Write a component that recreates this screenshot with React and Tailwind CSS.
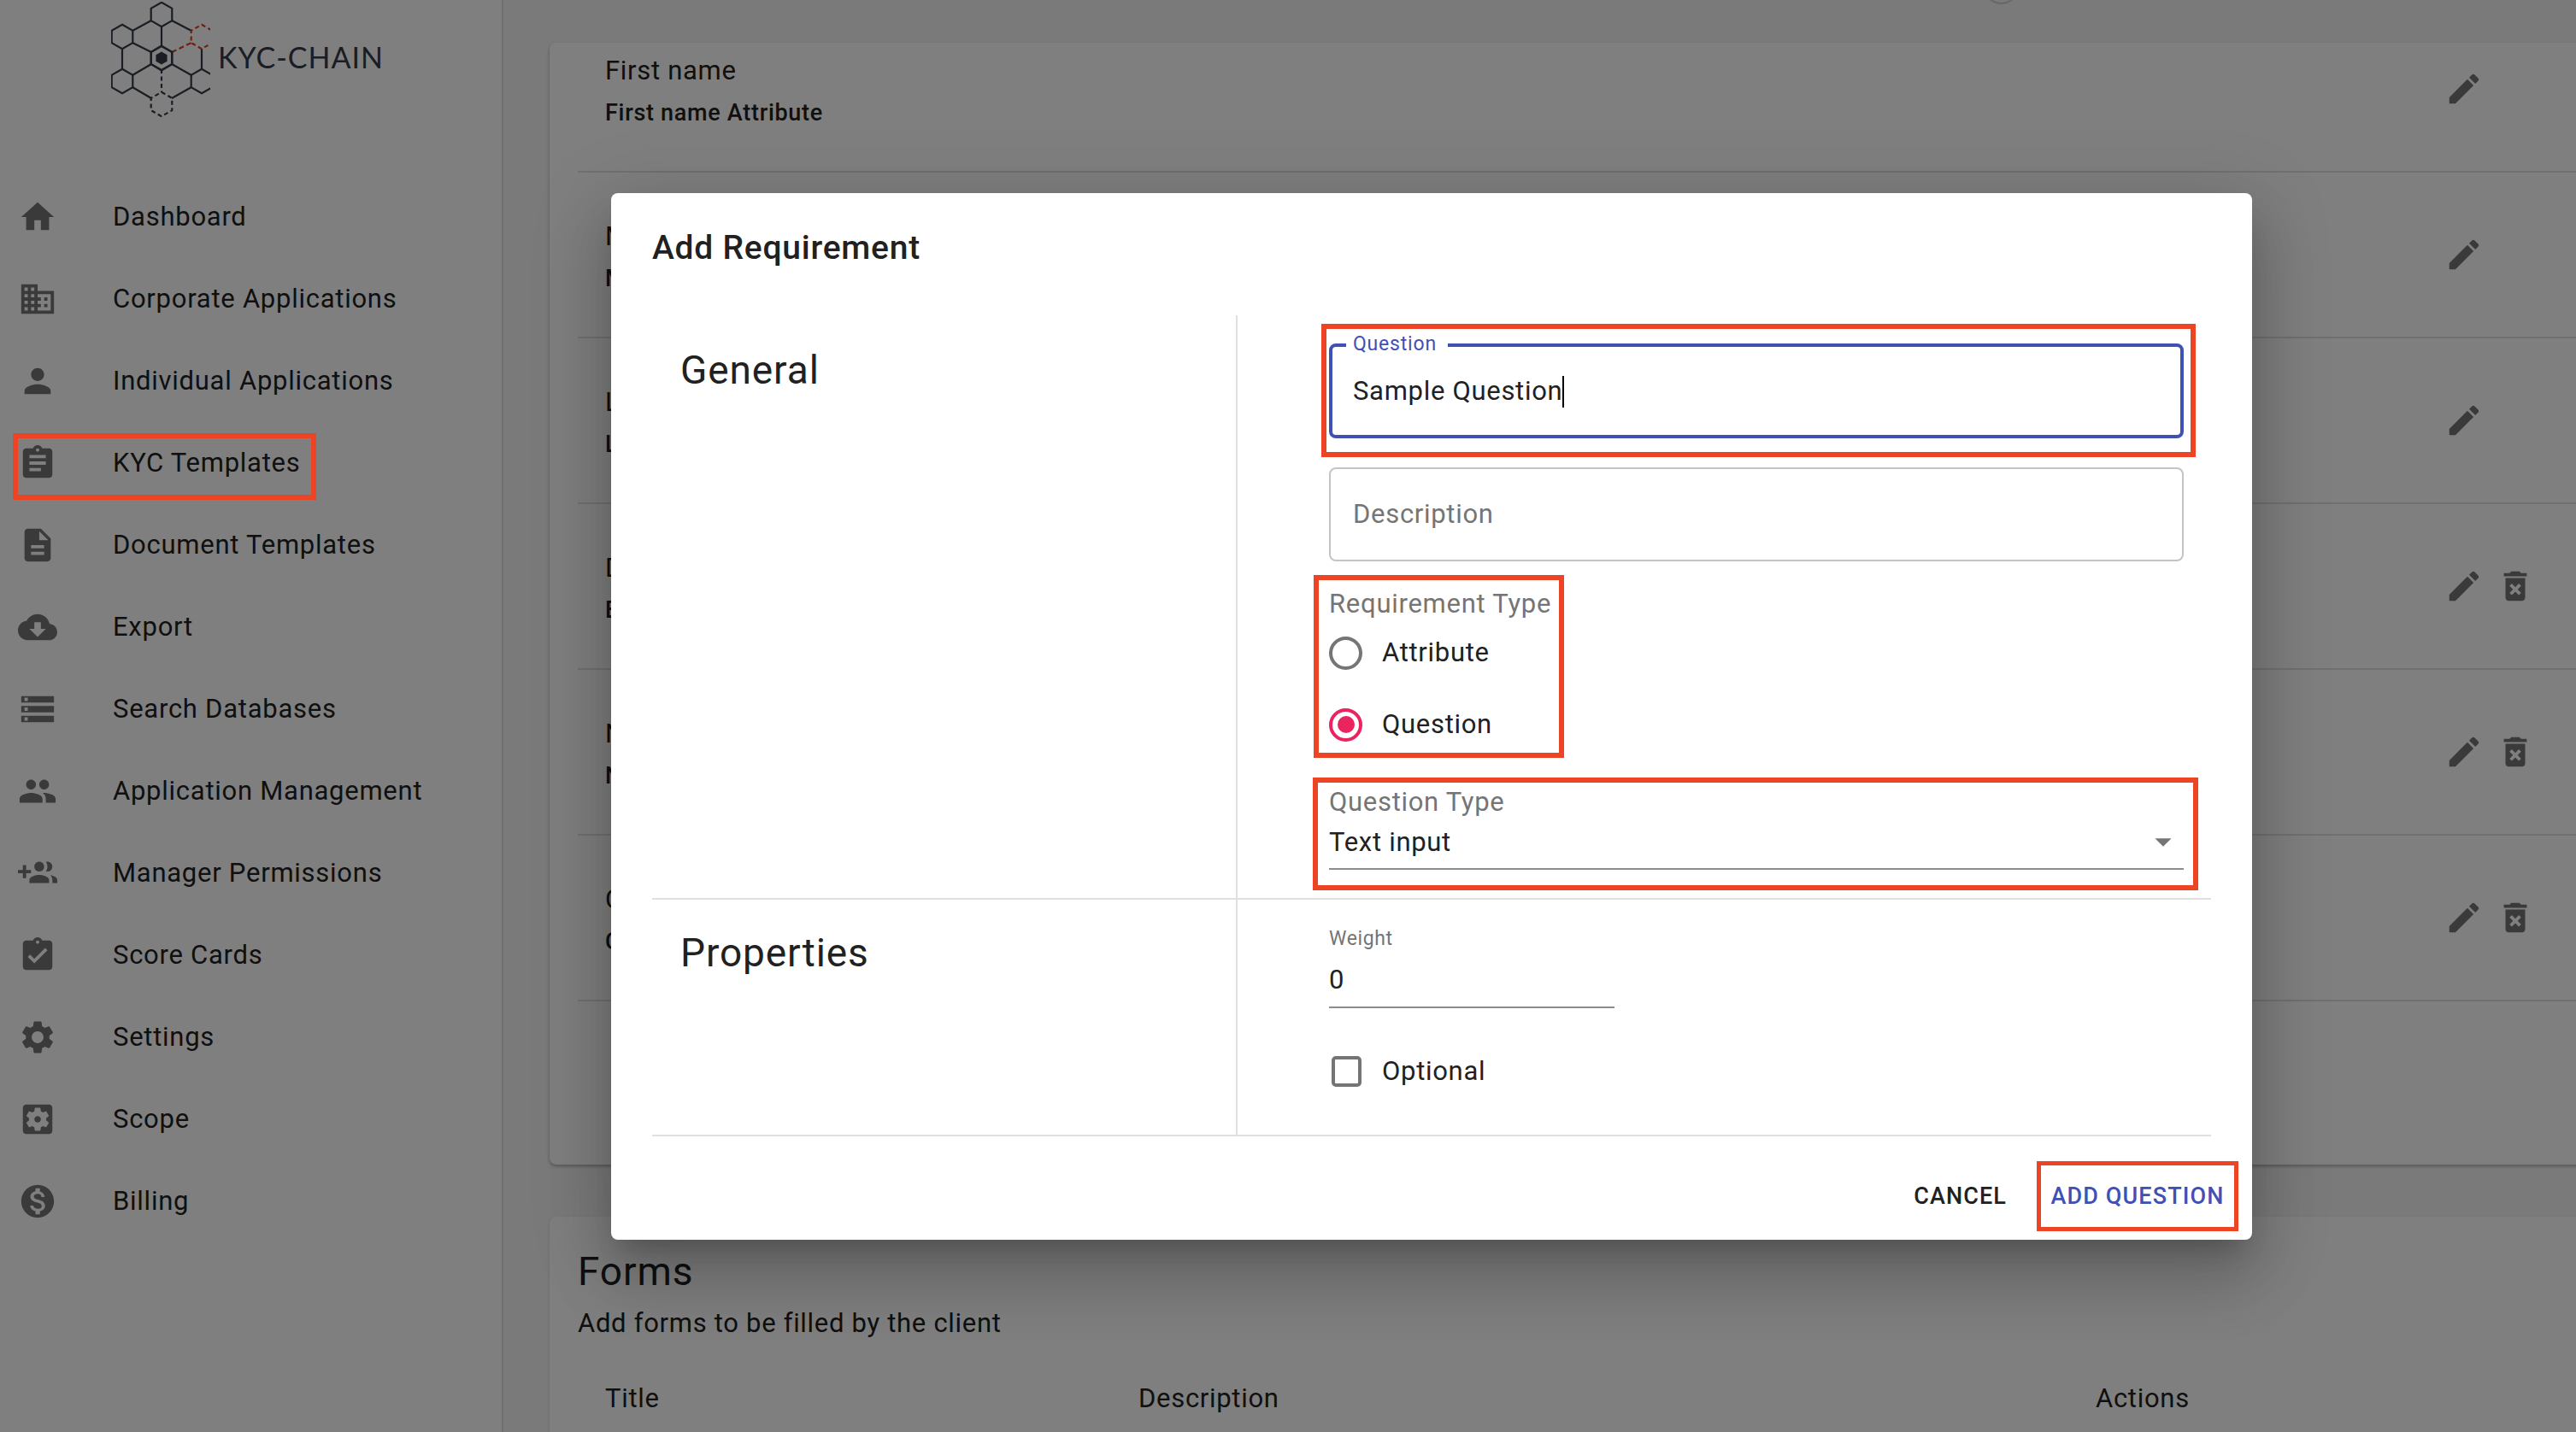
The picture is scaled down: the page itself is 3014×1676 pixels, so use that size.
import React from "react";

const ICONS = {
  home: "M10 20v-6h4v6h5v-8h3L12 3 2 12h3v8z",
  domain: "M12 7V3H2v18h20V7H12zM6 19H4v-2h2v2zm0-4H4v-2h2v2zm0-4H4V9h2v2zm0-4H4V5h2v2zm4 12H8v-2h2v2zm0-4H8v-2h2v2zm0-4H8V9h2v2zm0-4H8V5h2v2zm10 12h-8v-2h2v-2h-2v-2h2v-2h-2V9h8v10zm-2-8h-2v2h2v-2zm0 4h-2v2h2v-2z",
  person: "M12 12c2.21 0 4-1.79 4-4s-1.79-4-4-4-4 1.79-4 4 1.79 4 4 4zm0 2c-2.67 0-8 1.34-8 4v2h16v-2c0-2.66-5.33-4-8-4z",
  assignment: "M19 3h-4.18C14.4 1.84 13.3 1 12 1c-1.3 0-2.4.84-2.82 2H5c-1.1 0-2 .9-2 2v14c0 1.1.9 2 2 2h14c1.1 0 2-.9 2-2V5c0-1.1-.9-2-2-2zm-7 0c.55 0 1 .45 1 1s-.45 1-1 1-1-.45-1-1 .45-1 1-1zm2 14H7v-2h7v2zm3-4H7v-2h10v2zm0-4H7V7h10v2z",
  description: "M14 2H6c-1.1 0-1.99.9-1.99 2L4 20c0 1.1.89 2 1.99 2H18c1.1 0 2-.9 2-2V8l-6-6zm2 16H8v-2h8v2zm0-4H8v-2h8v2zm-3-5V3.5L18.5 9H13z",
  cloud: "M19.35 10.04C18.67 6.59 15.64 4 12 4 9.11 4 6.6 5.64 5.35 8.04 2.34 8.36 0 10.91 0 14c0 3.31 2.69 6 6 6h13c2.76 0 5-2.24 5-5 0-2.64-2.05-4.78-4.65-4.96zM17 13l-5 5-5-5h3V9h4v4h3z",
  storage: "M2 20h20v-4H2v4zm2-3h2v2H4v-2zM2 4v4h20V4H2zm4 3H4V5h2v2zm-4 7h20v-4H2v4zm2-3h2v2H4v-2z",
  people: "M16 11c1.66 0 2.99-1.34 2.99-3S17.66 5 16 5c-1.66 0-3 1.34-3 3s1.34 3 3 3zm-8 0c1.66 0 2.99-1.34 2.99-3S9.66 5 8 5C6.34 5 5 6.34 5 8s1.34 3 3 3zm0 2c-2.33 0-7 1.17-7 3.5V19h14v-2.5c0-2.33-4.67-3.5-7-3.5zm8 0c-.29 0-.62.02-.97.05 1.16.84 1.97 1.97 1.97 3.45V19h6v-2.5c0-2.33-4.67-3.5-7-3.5z",
  groupAdd: "M8 10H5V7H3v3H0v2h3v3h2v-3h3v-2zm10 1c1.66 0 2.99-1.34 2.99-3S19.66 5 18 5c-.32 0-.63.05-.91.14.57.81.9 1.79.9 2.86s-.34 2.04-.9 2.86c.28.09.59.14.91.14zm-5 0c1.66 0 2.99-1.34 2.99-3S14.66 5 13 5c-1.66 0-3 1.34-3 3s1.34 3 3 3zm6.62 2.16c.83.73 1.38 1.66 1.38 2.84v2h3v-2c0-1.54-2.37-2.49-4.38-2.84zM13 13c-2 0-6 1-6 3v2h12v-2c0-2-4-3-6-3z",
  turnedIn: "M19 3h-4.18C14.4 1.84 13.3 1 12 1c-1.3 0-2.4.84-2.82 2H5c-1.1 0-2 .9-2 2v14c0 1.1.9 2 2 2h14c1.1 0 2-.9 2-2V5c0-1.1-.9-2-2-2zm-7 0c.55 0 1 .45 1 1s-.45 1-1 1-1-.45-1-1 .45-1 1-1zm-2 14l-4-4 1.41-1.41L10 14.17l6.59-6.59L18 9l-8 8z",
  settings: "M19.14 12.94c.04-.3.06-.61.06-.94 0-.32-.02-.64-.07-.94l2.03-1.58c.18-.14.23-.41.12-.61l-1.92-3.32c-.12-.22-.37-.29-.59-.22l-2.39.96c-.5-.38-1.03-.7-1.62-.94l-.36-2.54c-.04-.24-.24-.41-.48-.41h-3.84c-.24 0-.43.17-.47.41l-.36 2.54c-.59.24-1.13.57-1.62.94l-2.39-.96c-.22-.08-.47 0-.59.22L2.74 8.87c-.12.21-.08.47.12.61l2.03 1.58c-.05.3-.09.63-.09.94s.02.64.07.94l-2.03 1.58c-.18.14-.23.41-.12.61l1.92 3.32c.12.22.37.29.59.22l2.39-.96c.5.38 1.03.7 1.62.94l.36 2.54c.05.24.24.41.48.41h3.84c.24 0 .44-.17.47-.41l.36-2.54c.59-.24 1.13-.56 1.62-.94l2.39.96c.22.08.47 0 .59-.22l1.92-3.32c.12-.22.07-.47-.12-.61l-2.01-1.58zM12 15.6c-1.98 0-3.6-1.62-3.6-3.6s1.62-3.6 3.6-3.6 3.6 1.62 3.6 3.6-1.62 3.6-3.6 3.6z",
  scope: "M12 10c-1.1 0-2 .9-2 2s.9 2 2 2 2-.9 2-2-.9-2-2-2zm7-7H5c-1.11 0-2 .9-2 2v14c0 1.1.89 2 2 2h14c1.11 0 2-.9 2-2V5c0-1.1-.89-2-2-2zm-1.75 9c0 .23-.02.46-.05.68l1.48 1.16c.13.11.17.3.08.45l-1.4 2.42c-.09.15-.27.21-.43.15l-1.74-.7c-.36.28-.76.51-1.18.69l-.26 1.85c-.03.17-.18.3-.35.3h-2.8c-.17 0-.32-.13-.35-.29l-.26-1.85c-.43-.18-.82-.41-1.18-.69l-1.74.7c-.16.06-.34 0-.43-.15l-1.4-2.42c-.09-.15-.05-.34.08-.45l1.48-1.16c-.03-.23-.05-.46-.05-.69 0-.23.02-.46.05-.68l-1.48-1.16c-.13-.11-.17-.3-.08-.45l1.4-2.42c.09-.15.27-.21.43-.15l1.74.7c.36-.28.76-.51 1.18-.69l.26-1.85c.03-.17.18-.3.35-.3h2.8c.17 0 .32.13.35.29l.26 1.85c.43.18.82.41 1.18.69l1.74-.7c.16-.06.34 0 .43.15l1.4 2.42c.09.15.05.34-.08.45l-1.48 1.16c.03.23.05.46.05.69z",
  money: "M12 2C6.48 2 2 6.48 2 12s4.48 10 10 10 10-4.48 10-10S17.52 2 12 2zm1.41 16.09V20h-2.67v-1.93c-1.71-.36-3.16-1.46-3.27-3.4h1.96c.1 1.05.82 1.87 2.65 1.87 1.96 0 2.4-.98 2.4-1.59 0-.83-.44-1.61-2.67-2.14-2.48-.6-4.18-1.62-4.18-3.67 0-1.72 1.39-2.84 3.11-3.21V4h2.67v1.95c1.86.45 2.79 1.86 2.85 3.39H14.3c-.05-1.11-.64-1.87-2.22-1.87-1.5 0-2.4.68-2.4 1.64 0 .84.65 1.39 2.67 1.91s4.18 1.39 4.18 3.91c-.01 1.83-1.38 2.83-3.12 3.16z",
  edit: "M3 17.25V21h3.75L17.81 9.94l-3.75-3.75L3 17.25zM20.71 7.04c.39-.39.39-1.02 0-1.41l-2.34-2.34c-.39-.39-1.02-.39-1.41 0l-1.83 1.83 3.75 3.75 1.83-1.83z",
  trash: "M6 19c0 1.1.9 2 2 2h8c1.1 0 2-.9 2-2V7H6v12zm2.46-7.12l1.41-1.41L12 12.59l2.12-2.12 1.41 1.41L13.41 14l2.12 2.12-1.41 1.41L12 15.41l-2.12 2.12-1.41-1.41L10.59 14l-2.13-2.12zM15.5 4l-1-1h-5l-1 1H5v2h14V4z",
  arrow: "M7 10l5 5 5-5z",
};

const NAV = [
  { label: "Dashboard", icon: "home" },
  { label: "Corporate Applications", icon: "domain" },
  { label: "Individual Applications", icon: "person" },
  { label: "KYC Templates", icon: "assignment" },
  { label: "Document Templates", icon: "description" },
  { label: "Export", icon: "cloud" },
  { label: "Search Databases", icon: "storage" },
  { label: "Application Management", icon: "people" },
  { label: "Manager Permissions", icon: "groupAdd" },
  { label: "Score Cards", icon: "turnedIn" },
  { label: "Settings", icon: "settings" },
  { label: "Scope", icon: "scope" },
  { label: "Billing", icon: "money" },
];

const ROWS = [
  { title: "First name", sub: "First name Attribute" },
  { title: "Middle name", sub: "Middle name Attribute" },
  { title: "Last name", sub: "Last name Attribute" },
  { title: "Date of birth", sub: "Enter date of birth", removable: true },
  { title: "Nationality", sub: "Nationality Attribute", removable: true },
  { title: "Country of residence", sub: "Country of residence Attribute", removable: true },
];

function Icon({ name, className }) {
  return (
    <svg viewBox="0 0 24 24" fill="currentColor" className={className}>
      <path d={ICONS[name]} />
    </svg>
  );
}

// pointy-top hexagon for the logo
function hex(cx, cy, r) {
  const w = r * 0.866;
  return `${cx},${cy - r} ${cx + w},${cy - r / 2} ${cx + w},${cy + r / 2} ${cx},${cy + r} ${cx - w},${cy + r / 2} ${cx - w},${cy - r / 2}`;
}

function Logo() {
  const dark = "#343c48";
  const red = "#d4432a";
  const solid = [
    [188, 31, 188, 55], [176, 24, 154, 36], [200, 24, 223, 36], [154, 50, 176, 61], [142, 57, 142, 81],
    [176, 75, 154, 88], [200, 75, 223, 88], [235, 57, 235, 81], [154, 102, 176, 115], [223, 102, 200, 115],
  ];
  return (
    <div className="flex h-[206px] items-start pl-[130px] pt-[2px]">
      <svg viewBox="129 2 116 135" className="h-[135px] w-[116px] shrink-0" fill="none" stroke={dark} strokeWidth="2.2">
        {solid.map((l, i) => (
          <line key={i} x1={l[0]} y1={l[1]} x2={l[2]} y2={l[3]} />
        ))}
        <line x1="188" y1="81" x2="188" y2="108" strokeDasharray="5 3.5" />
        <line x1="200" y1="61" x2="223" y2="50" stroke={red} strokeDasharray="6 3.5" />
        <polygon points={hex(188, 17, 14.2)} />
        <polygon points={hex(142, 43, 14.2)} />
        <polygon points={hex(142, 95, 14.2)} />
        <polygon points={hex(235, 95, 14.2)} />
        <polygon points={hex(235, 43, 14.2)} stroke={red} strokeDasharray="5 3.5" />
        <polygon points={hex(188, 122, 14.2)} strokeDasharray="5 3.5" />
        <polygon points={hex(188, 68, 14.2)} strokeWidth="2.6" />
        <polygon points={hex(188, 68, 7.6)} fill={dark} stroke="none" />
      </svg>
      <span className="ml-[9px] mt-[46px] font-['Lato',sans-serif] text-[34px] leading-[38px] tracking-[1px] text-[#343c48]">KYC-CHAIN</span>
    </div>
  );
}

function Sidebar() {
  return (
    <aside className="h-full w-[589px] shrink-0 border-r-2 border-[#dedede] bg-white">
      <Logo />
      <nav>
        {NAV.map((item) => (
          <div key={item.label} className="flex h-[96px] items-center pl-[21px]">
            <Icon name={item.icon} className="h-[46px] w-[46px] shrink-0 text-[#757575]" />
            <span className="ml-[65px] text-[31px] leading-[40px] tracking-[0.74px] text-[#212121]">{item.label}</span>
          </div>
        ))}
      </nav>
    </aside>
  );
}

function Main() {
  return (
    <main className="relative h-full flex-1 overflow-hidden bg-[#f5f5f5] pl-[54px] pt-[50px]">
      <div className="absolute left-[1732px] top-[-36px] h-[41px] w-[41px] rounded-full border-2 border-[#cfcfcf]" />

      <section className="h-[1313px] w-[2400px] overflow-hidden rounded-lg bg-white shadow-[0_2px_4px_rgba(0,0,0,0.3)]">
        <div className="mt-[-42px] pl-[33px]">
          {ROWS.map((row) => (
            <div key={row.title} className="flex h-[194px] items-center justify-between border-b-2 border-[#e0e0e0] pl-[32px]">
              <div className="pt-[4px]">
                <div className="text-[31px] leading-[46px] tracking-[0.7px] text-[#212121]">{row.title}</div>
                <div className="mt-[6px] text-[27px] font-medium leading-[40px] tracking-[0.7px] text-[#212121]">{row.sub}</div>
              </div>
              <div className="flex w-[183px] items-center gap-[14px] text-[#757575]">
                <Icon name="edit" className="h-[46px] w-[46px]" />
                {row.removable && <Icon name="trash" className="h-[46px] w-[46px]" />}
              </div>
            </div>
          ))}
        </div>
      </section>

      <section className="mt-[61px] h-[400px] w-[2400px] rounded-lg bg-white pl-[33px] pt-[36px] shadow-[0_2px_4px_rgba(0,0,0,0.15)]">
        <h2 className="text-[46px] leading-[56px] tracking-[0.9px] text-[#212121]">Forms</h2>
        <p className="mt-[13px] text-[31px] leading-[40px] tracking-[0.7px] text-[#212121]">Add forms to be filled by the client</p>
        <div className="mt-[48px] flex pl-[32px] text-[31px] leading-[40px] tracking-[0.7px] text-[#212121]">
          <span className="w-[624px]">Title</span>
          <span className="w-[1120px]">Description</span>
          <span>Actions</span>
        </div>
      </section>
    </main>
  );
}

function Mark({ className }) {
  return <div className={`pointer-events-none absolute border-[6px] border-[#ee4426] ${className}`} />;
}

function Dialog() {
  return (
    <div className="absolute left-[715px] top-[226px] h-[1225px] w-[1920px] rounded-lg bg-white shadow-[0_21px_29px_-13px_rgba(0,0,0,0.2),0_46px_73px_6px_rgba(0,0,0,0.14),0_17px_88px_15px_rgba(0,0,0,0.12)]">
      <h2 className="h-[143px] pl-[48px] pt-[41px] text-[39px] font-medium leading-[46px] tracking-[0.76px] text-[#212121]">Add Requirement</h2>

      <div className="mx-[48px]">
        {/* General */}
        <div className="flex h-[684px] border-b-2 border-[#e0e0e0]">
          <div className="w-[683px] pl-[33px] pt-[41px] text-[46px] leading-[46px] tracking-[0.9px] text-[#212121]">General</div>
          <div className="flex-1 border-l-2 border-[#e0e0e0] pl-[107px] pt-[33px]">
            <div className="relative flex h-[111px] w-[1000px] items-center rounded-lg border-4 border-[#3f51b5] pl-[24px] pt-[2px] text-[31px] tracking-[0.7px] text-[#212121]">
              <span className="absolute left-[16px] top-[-17px] bg-white pl-[8px] pr-[13px] text-[23px] leading-[28px] tracking-[0.8px] text-[#3f51b5]">Question</span>
              <span>Sample Question</span>
              <span className="h-[37px] w-[2px] bg-black" />
              <Mark className="left-[-13px] top-[-27px] h-[156px] w-[1023px]" />
            </div>
            <div className="mt-[34px] flex h-[110px] w-[1000px] items-center rounded-lg border-2 border-[#c4c4c4] pl-[26px] text-[31px] tracking-[0.7px] text-[#757575]">Description</div>

            <div className="relative">
              <Mark className="left-[-18px] top-[16px] h-[214px] w-[293px]" />
              <div className="pt-[33px] text-[31px] leading-[33px] tracking-[0.74px] text-[#757575]">Requirement Type</div>
              <div className="mt-[1px] flex h-[80px] items-center gap-[23px] text-[31px] tracking-[0.7px] text-[#212121]">
                <span className="h-[39px] w-[39px] rounded-full border-4 border-[#757575]" />
                Attribute
              </div>
              <div className="mt-[4px] flex h-[80px] items-center gap-[23px] text-[31px] tracking-[0.7px] text-[#212121]">
                <span className="flex h-[39px] w-[39px] items-center justify-center rounded-full border-4 border-[#e9245f]">
                  <span className="h-[20px] w-[20px] rounded-full bg-[#e9245f]" />
                </span>
                Question
              </div>
            </div>

            <div className="relative w-[1000px]">
              <Mark className="left-[-19px] top-[22px] h-[132px] w-[1036px]" />
              <div className="pt-[34px] text-[31px] leading-[33px] tracking-[0.7px] text-[#757575]">Question Type</div>
              <div className="mt-[13px] flex h-[50px] justify-between border-b-2 border-[#8c8c8c] text-[31px] leading-[36px] tracking-[0.7px] text-[#212121]">
                <span>Text input</span>
                <Icon name="arrow" className="mr-[1px] mt-[-6px] h-[46px] w-[46px] text-[#757575]" />
              </div>
            </div>
          </div>
        </div>

        {/* Properties */}
        <div className="flex h-[277px] border-b-2 border-[#e0e0e0]">
          <div className="w-[683px] pl-[33px] pt-[39px] text-[46px] leading-[46px] tracking-[0.9px] text-[#212121]">Properties</div>
          <div className="flex-1 border-l-2 border-[#e0e0e0] pl-[107px] pt-[32px]">
            <div className="text-[23px] leading-[28px] tracking-[0.6px] text-[#757575]">Weight</div>
            <div className="mt-[16px] h-[51px] w-[334px] border-b-2 border-[#8c8c8c] text-[31px] leading-[36px] tracking-[0.7px] text-[#212121]">0</div>
            <div className="mt-[54px] flex h-[40px] items-center pl-[3px] text-[31px] tracking-[0.7px] text-[#212121]">
              <span className="h-[36px] w-[35px] rounded-[5px] border-4 border-[#757575]" />
              <span className="ml-[24px]">Optional</span>
            </div>
          </div>
        </div>
      </div>

      <div className="flex items-start justify-end pr-[16px] pt-[29px] text-[27px] font-medium tracking-[1.1px]">
        <button className="mr-[35px] h-[82px] uppercase text-[#212121]">Cancel</button>
        <button className="h-[82px] w-[236px] whitespace-nowrap border-[5px] border-[#ee4426] uppercase text-[#3f51b5]">Add Question</button>
      </div>
    </div>
  );
}

export default function App() {
  return (
    <div className="relative flex h-[1676px] w-[3014px] overflow-hidden bg-[#f5f5f5] font-['Roboto',sans-serif]">
      <Sidebar />
      <Main />
      <div className="absolute inset-0 bg-black/50" />
      <Mark className="left-[15px] top-[507px] h-[78px] w-[355px]" />
      <Dialog />
    </div>
  );
}
